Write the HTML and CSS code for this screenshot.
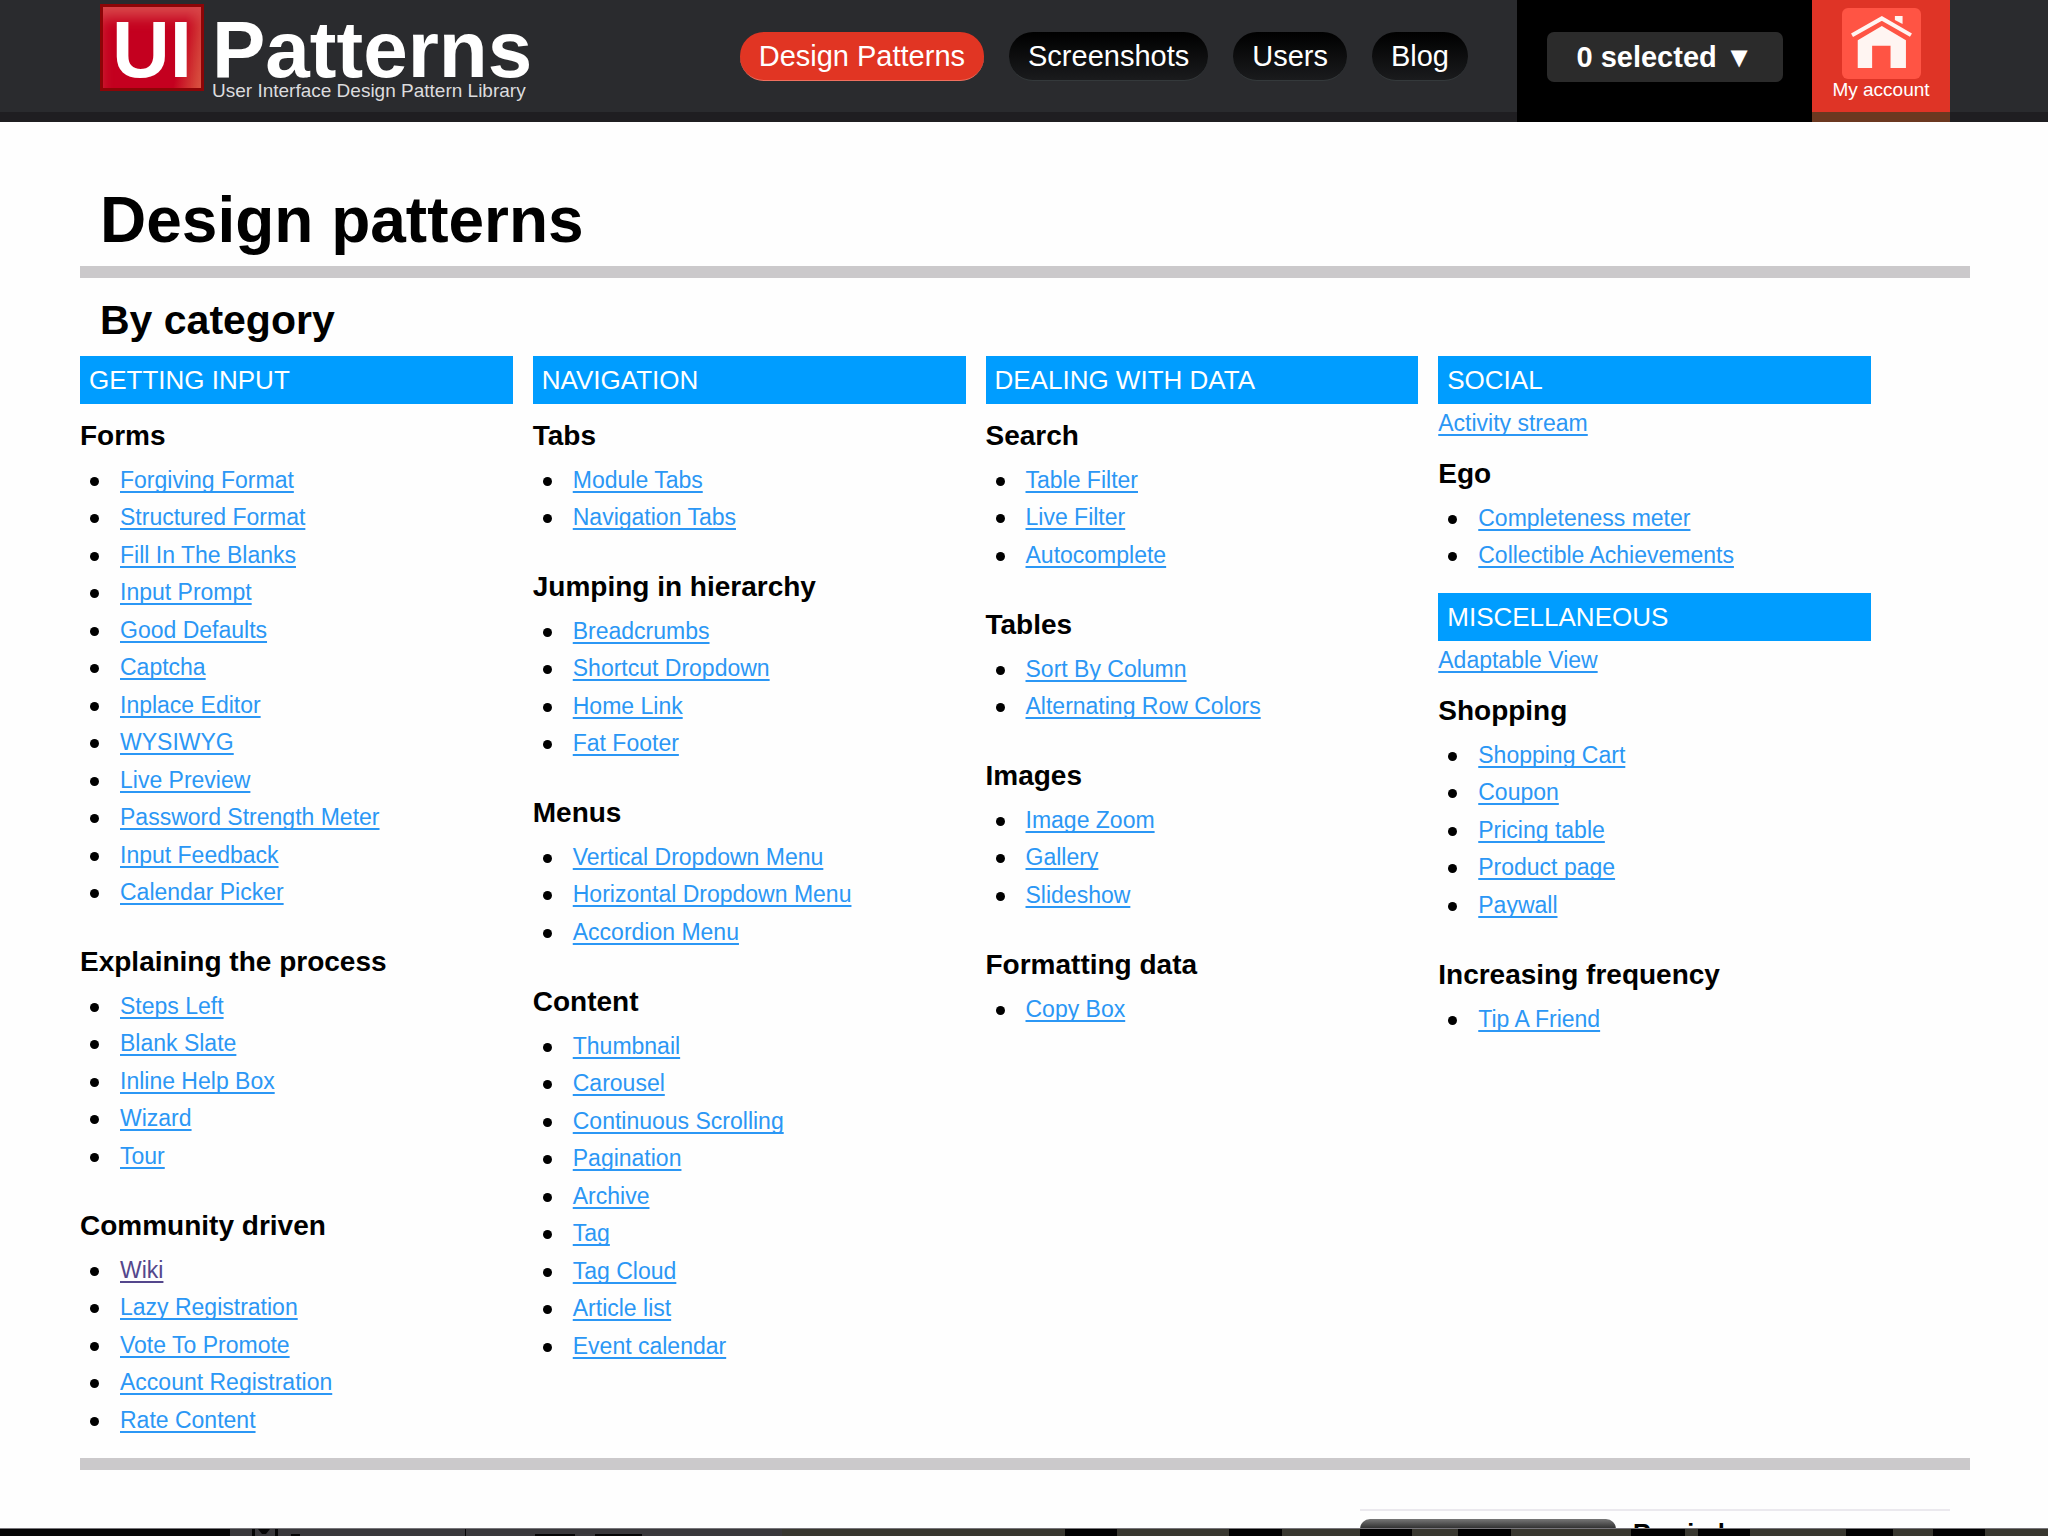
FILE: index.html
```
<!DOCTYPE html>
<html lang="en">
<head>
    <meta charset="UTF-8">
    <meta name="viewport" content="width=device-width, initial-scale=1.0">
    <title>Design patterns</title>
    <link rel="stylesheet" href="styles.css">
</head>
<body>
    <header class="header">
        <a class="logo" href="#">
            <span class="logo-badge">UI</span>
            <span class="logo-text">
                <span class="logo-name">Patterns</span>
                <span class="logo-tagline">User Interface Design Pattern Library</span>
            </span>
        </a>

        <nav class="nav">
            <a class="nav-link active" href="#">Design Patterns</a>
            <a class="nav-link" href="#">Screenshots</a>
            <a class="nav-link" href="#">Users</a>
            <a class="nav-link" href="#">Blog</a>
        </nav>

        <div class="selection">
            <button type="button" class="selection-btn">0 selected ▼</button>
        </div>

        <a class="account" href="#">
            <svg class="account-icon" viewBox="0 0 236 212" aria-hidden="true">
                <rect width="236" height="212" rx="18" fill="#ff5444"/>
                <path d="M30 81 L119 31 L206 81" fill="none" stroke="#fff5f2" stroke-width="12"/>
                <path d="M158 24 H181 V48 L158 36 Z" fill="#fff5f2"/>
                <path d="M119 54 L191 96 V179 H145 V113 H90 V179 H47 V96 Z" fill="#fff5f2"/>
            </svg>
            <span class="account-label">My account</span>
        </a>
    </header>

    <main class="container">
        <h1>Design patterns</h1>

        <section class="categories">
            <h2>By category</h2>

            <div class="columns">
                <div class="column">
                    <h3>GETTING INPUT</h3>
                    <h4>Forms</h4>
                    <ul>
                        <li><a href="#">Forgiving Format</a></li>
                        <li><a href="#">Structured Format</a></li>
                        <li><a href="#">Fill In The Blanks</a></li>
                        <li><a href="#">Input Prompt</a></li>
                        <li><a href="#">Good Defaults</a></li>
                        <li><a href="#">Captcha</a></li>
                        <li><a href="#">Inplace Editor</a></li>
                        <li><a href="#">WYSIWYG</a></li>
                        <li><a href="#">Live Preview</a></li>
                        <li><a href="#">Password Strength Meter</a></li>
                        <li><a href="#">Input Feedback</a></li>
                        <li><a href="#">Calendar Picker</a></li>
                    </ul>
                    <h4>Explaining the process</h4>
                    <ul>
                        <li><a href="#">Steps Left</a></li>
                        <li><a href="#">Blank Slate</a></li>
                        <li><a href="#">Inline Help Box</a></li>
                        <li><a href="#">Wizard</a></li>
                        <li><a href="#">Tour</a></li>
                    </ul>
                    <h4>Community driven</h4>
                    <ul>
                        <li><a class="visited" href="#">Wiki</a></li>
                        <li><a href="#">Lazy Registration</a></li>
                        <li><a href="#">Vote To Promote</a></li>
                        <li><a href="#">Account Registration</a></li>
                        <li><a href="#">Rate Content</a></li>
                    </ul>
                </div>

                <div class="column">
                    <h3>NAVIGATION</h3>
                    <h4>Tabs</h4>
                    <ul>
                        <li><a href="#">Module Tabs</a></li>
                        <li><a href="#">Navigation Tabs</a></li>
                    </ul>
                    <h4>Jumping in hierarchy</h4>
                    <ul>
                        <li><a href="#">Breadcrumbs</a></li>
                        <li><a href="#">Shortcut Dropdown</a></li>
                        <li><a href="#">Home Link</a></li>
                        <li><a href="#">Fat Footer</a></li>
                    </ul>
                    <h4>Menus</h4>
                    <ul>
                        <li><a href="#">Vertical Dropdown Menu</a></li>
                        <li><a href="#">Horizontal Dropdown Menu</a></li>
                        <li><a href="#">Accordion Menu</a></li>
                    </ul>
                    <h4>Content</h4>
                    <ul>
                        <li><a href="#">Thumbnail</a></li>
                        <li><a href="#">Carousel</a></li>
                        <li><a href="#">Continuous Scrolling</a></li>
                        <li><a href="#">Pagination</a></li>
                        <li><a href="#">Archive</a></li>
                        <li><a href="#">Tag</a></li>
                        <li><a href="#">Tag Cloud</a></li>
                        <li><a href="#">Article list</a></li>
                        <li><a href="#">Event calendar</a></li>
                    </ul>
                </div>

                <div class="column">
                    <h3>DEALING WITH DATA</h3>
                    <h4>Search</h4>
                    <ul>
                        <li><a href="#">Table Filter</a></li>
                        <li><a href="#">Live Filter</a></li>
                        <li><a href="#">Autocomplete</a></li>
                    </ul>
                    <h4>Tables</h4>
                    <ul>
                        <li><a href="#">Sort By Column</a></li>
                        <li><a href="#">Alternating Row Colors</a></li>
                    </ul>
                    <h4>Images</h4>
                    <ul>
                        <li><a href="#">Image Zoom</a></li>
                        <li><a href="#">Gallery</a></li>
                        <li><a href="#">Slideshow</a></li>
                    </ul>
                    <h4>Formatting data</h4>
                    <ul>
                        <li><a href="#">Copy Box</a></li>
                    </ul>
                </div>

                <div class="column">
                    <h3>SOCIAL</h3>
                    <p><a href="#">Activity stream</a></p>
                    <h4>Ego</h4>
                    <ul>
                        <li><a href="#">Completeness meter</a></li>
                        <li><a href="#">Collectible Achievements</a></li>
                    </ul>
                    <h3>MISCELLANEOUS</h3>
                    <p><a href="#">Adaptable View</a></p>
                    <h4>Shopping</h4>
                    <ul>
                        <li><a href="#">Shopping Cart</a></li>
                        <li><a href="#">Coupon</a></li>
                        <li><a href="#">Pricing table</a></li>
                        <li><a href="#">Product page</a></li>
                        <li><a href="#">Paywall</a></li>
                    </ul>
                    <h4>Increasing frequency</h4>
                    <ul>
                        <li><a href="#">Tip A Friend</a></li>
                    </ul>
                </div>
            </div>
        </section>

        <aside class="promo">
            <div class="promo-thumb"></div>
            <div class="promo-title">Reminder</div>
        </aside>
    </main>

    <!-- Strip that stays on the bottom edge of the window -->
    <div class="dock">
        <svg class="dock-art" viewBox="0 0 2048 7" preserveAspectRatio="none" aria-hidden="true">
            <rect width="2048" height="7" fill="#38372f"/>
            <rect width="782" height="7" fill="#39383b"/>
            <path d="M0 0H230V7H0ZM252 0H255V7H252ZM258 0H270L266 5H262ZM275 0H278V7H275ZM291 5H300V7H291ZM465 0H466V7H465ZM535 5H575V7H535ZM595 5H642V7H595Z" fill="#050505"/>
            <path d="M1065 0H1117V7H1065ZM1229 0H1282V7H1229ZM1360 0H1412V7H1360ZM1458 0H1511V7H1458ZM1631 0H1685V7H1631ZM1698 0H1750V7H1698ZM1846 0H1893V7H1846ZM1933 0H1985V7H1933Z" fill="#000"/>
        </svg>
    </div>
</body>
</html>
```

FILE: styles.css
```
* {
    margin: 0;
    padding: 0;
    box-sizing: border-box;
}

body {
    height: 100vh;
    overflow: hidden;
    background-color: #fefefe;
    color: #000;
    font-family: "Liberation Sans", Arial, Helvetica, sans-serif;
    font-size: 23px;
}

/* Header */
.header {
    display: flex;
    align-items: stretch;
    height: 122px;
    padding: 0 98px 0 100px;
    background: linear-gradient(#2a2b2e 112px, #1f1e21 112px);
}

.header a {
    color: #fff;
    text-decoration: none;
}

.logo {
    display: flex;
    align-items: flex-start;
    gap: 8px;
    font-weight: bold;
    white-space: nowrap;
}

.logo-badge {
    width: 104px;
    height: 87px;
    margin-top: 4px;
    padding-top: 12px;
    border: 3px solid #8c0507;
    background: linear-gradient(100deg, #c4001f 75%, #d9573f 100%);
    box-shadow: inset 0 14px 14px -4px #d9474a;
    font-size: 80px;
    line-height: 62px;
    text-align: center;
}

.logo-text {
    display: flex;
    flex-direction: column;
    padding-top: 19px;
}

.logo-name {
    font-size: 80px;
    line-height: 62px;
}

.logo-tagline {
    color: #dcdcde;
    font-size: 19px;
    font-weight: normal;
    line-height: 20px;
}

.nav {
    display: flex;
    align-items: flex-start;
    gap: 25px;
    margin-left: auto;
    padding: 32px 49px 0 0;
}

.nav-link {
    padding: 0 19px;
    border-bottom: 1px solid #34393b;
    border-radius: 24px;
    background: linear-gradient(#000, #1a1b1d);
    font-size: 29px;
    line-height: 48px;
    white-space: nowrap;
}

.nav-link.active {
    border-bottom-color: #f0705f;
    background: #e13523;
}

.selection {
    padding: 32px 29px 0 30px;
    background-color: #000;
}

.selection-btn {
    width: 236px;
    height: 50px;
    border: none;
    border-radius: 7px;
    background-color: #2b2b2b;
    color: #fff;
    font-family: inherit;
    font-size: 29px;
    font-weight: bold;
    cursor: pointer;
}

.account {
    display: flex;
    flex-direction: column;
    align-items: center;
    width: 138px;
    padding-top: 8px;
    border-bottom: 10px solid #6b3820;
    background-color: #df3426;
}

.account-icon {
    width: 79px;
    height: 71px;
}

.account-label {
    font-size: 19px;
    line-height: 22px;
}

/* Page */
.container {
    padding: 62px 78px 0 80px;
}

h1 {
    padding: 0 20px 10px;
    border-bottom: 12px solid #cbc9cb;
    font-size: 64px;
    line-height: 72px;
}

.categories {
    border-bottom: 12px solid #cbc9cb;
}

h2 {
    padding: 19px 20px 13px;
    font-size: 41px;
    line-height: 46px;
}

.columns {
    display: grid;
    grid-template-columns: repeat(4, 1fr);
    gap: 20px;
    padding-right: 99px;
}

h3 {
    padding: 0 9px;
    background-color: #009dff;
    color: #fff;
    font-size: 26px;
    font-weight: normal;
    line-height: 48px;
}

h4 {
    padding: 14px 0 7px;
    font-size: 28px;
    line-height: 36px;
}

.column p {
    line-height: 38px;
}

.column ul {
    padding: 0 0 19px 40px;
    list-style: none;
}

.column li {
    line-height: 38px;
}

.column li:nth-child(even) {
    line-height: 37px;
}

.column li::before {
    content: "";
    display: inline-block;
    width: 9px;
    height: 9px;
    margin: 0 21px 0 -30px;
    border-radius: 50%;
    background-color: #000;
    vertical-align: middle;
}

.column a {
    color: #2b97f5;
    text-decoration-thickness: 2px;
    text-underline-offset: 3px;
    text-decoration-skip-ink: none;
}

.column a.visited {
    color: #54478c;
}

.promo {
    display: flex;
    gap: 17px;
    width: 590px;
    margin: 39px 20px 0 auto;
    padding-top: 8px;
    border-top: 2px solid #ebe9ee;
}

.promo-thumb {
    width: 256px;
    height: 160px;
    border-radius: 10px;
    background: linear-gradient(#777, #2a2a2a 10px, #000 20px);
}

.promo-title {
    font-size: 25px;
    font-weight: bold;
    line-height: 28px;
}

.dock {
    position: fixed;
    right: 0;
    bottom: 0;
    left: 0;
    height: 8px;
    border-top: 1px solid #77757a;
}

.dock-art {
    display: block;
    width: 100%;
    height: 7px;
}
```
